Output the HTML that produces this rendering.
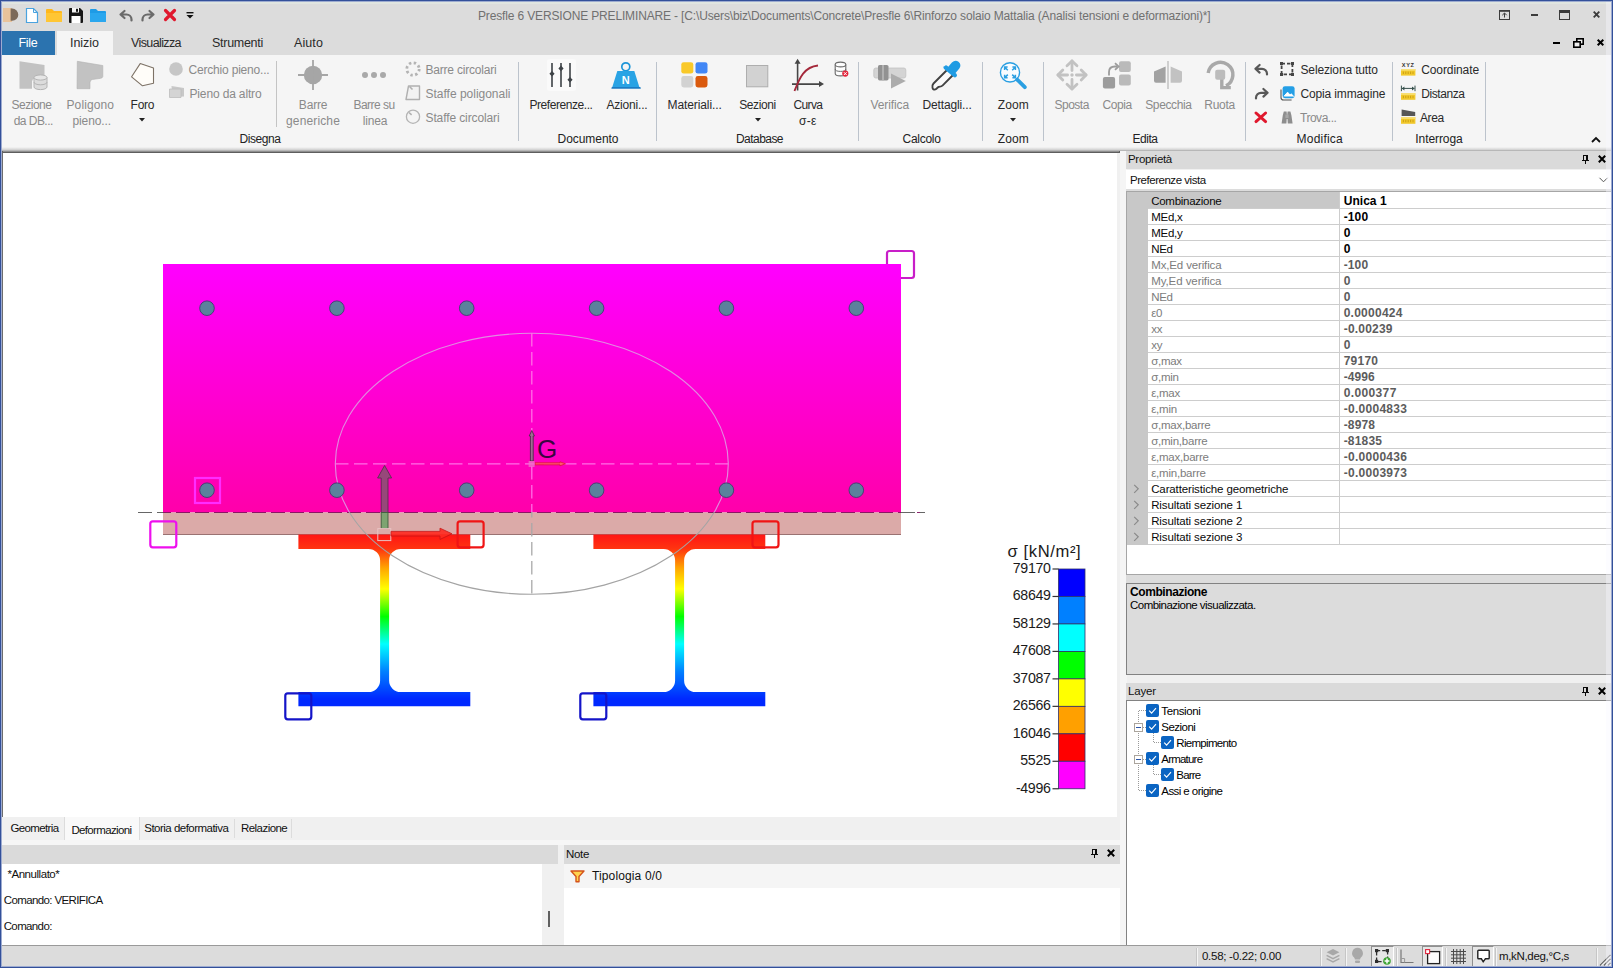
<!DOCTYPE html>
<html lang="it">
<head>
<meta charset="utf-8">
<title>Presfle 6</title>
<style>
*{box-sizing:border-box;margin:0;padding:0}
html,body{width:1613px;height:968px;overflow:hidden;background:#dcdcdc}
body{position:relative;font-family:"Liberation Sans",sans-serif;font-size:12px;color:#2a2a2a}
.a{position:absolute}
.t{position:absolute;white-space:nowrap;line-height:14px}
svg{position:absolute;overflow:visible}
/* frame */
#frame{left:0;top:0;width:1613px;height:968px;border:1px solid #33509a;pointer-events:none;z-index:50}
#titlebar{left:1px;top:1px;width:1611px;height:53px;background:#dcdcdc}
#ribbon{left:1px;top:55px;width:1611px;height:95px;background:#f5f5f5}
#ribshadow{left:1px;top:147px;width:1611px;height:4px;background:linear-gradient(#f5f5f5,#d8d8d8 60%,#a8a8a8)}
/* canvas */
#mid{left:1px;top:151px;width:1611px;height:794px;background:#f0f0f0}
#canvasbox{left:1px;top:151px;width:1119px;height:666px;background:#f0f0f0;border-left:2px solid #6d6d6d;border-top:2px solid #5e5e5e}
#canvas{left:3px;top:153px;width:1113.5px;height:664px;background:#fff}
#vtabs{left:1px;top:817px;width:1119px;height:23px;background:#f0f0f0}
/* layer tree */
.cb{position:absolute;width:13px;height:13px;background:#0a64c2;border-radius:2px}
</style>
</head>
<body>
<div class="a" id="titlebar"></div>

<div class="a" style="left:1px;top:1px;width:1611px;height:1px;background:#9dabd0"></div><div class="a" style="left:1px;top:2px;width:1611px;height:2px;background:#e0e5e0"></div>
<div class="a" id="ribbon"></div>
<div class="a" id="ribshadow"></div>
<svg style="left:3px;top:7px" width="16" height="16" viewBox="0 0 16 16"><rect x="0" y="1" width="9" height="14" fill="#e9c39b"/><path d="M7.6 1.6h1.6a6.1 6.1 0 0 1 0 12.2h-1.6z" fill="#7c6a5a"/></svg>
<svg style="left:25px;top:7px" width="14" height="17" viewBox="0 0 14 17"><path d="M1.5 1.5h7l4 4v10h-11z" fill="#fff" stroke="#4aa3df" stroke-width="1.2"/><path d="M8.5 1.5v4h4" fill="none" stroke="#4aa3df" stroke-width="1"/></svg>
<svg style="left:46px;top:8px" width="16" height="14" viewBox="0 0 16 14"><path d="M0 2a1 1 0 0 1 1-1h5l2 2h7a1 1 0 0 1 1 1v9a1 1 0 0 1-1 1h-14a1 1 0 0 1-1-1z" fill="#ffb81c"/><path d="M0 5h16v8a1 1 0 0 1-1 1h-14a1 1 0 0 1-1-1z" fill="#ffc634"/></svg>
<svg style="left:69px;top:8px" width="14" height="15" viewBox="0 0 14 15"><path d="M0 1a1 1 0 0 1 1-1h10l3 3v11a1 1 0 0 1-1 1h-12a1 1 0 0 1-1-1z" fill="#161616"/><rect x="3" y="0" width="7" height="4.5" fill="#f5f5f5"/><rect x="7" y="0.8" width="2" height="3" fill="#161616"/><rect x="2.5" y="8" width="9" height="7" fill="#fff"/></svg>
<svg style="left:90px;top:8px" width="16" height="14" viewBox="0 0 16 14"><path d="M0 2a1 1 0 0 1 1-1h5l2 2h7a1 1 0 0 1 1 1v9a1 1 0 0 1-1 1h-14a1 1 0 0 1-1-1z" fill="#1e9be6"/><path d="M0 5h16v8a1 1 0 0 1-1 1h-14a1 1 0 0 1-1-1z" fill="#2aa7ee"/></svg>
<svg style="left:119px;top:10px" width="14" height="11" viewBox="0 0 14 11"><path d="M5.5 1L1.5 4.5l4 3.5M1.5 4.5h6a5 5 0 0 1 5 5v1" fill="none" stroke="#6a6a6a" stroke-width="2.2" stroke-linecap="round" stroke-linejoin="round"/></svg>
<svg style="left:141px;top:10px" width="14" height="11" viewBox="0 0 14 11"><path d="M8.5 1l4 3.5l-4 3.5M12.5 4.5h-6a5 5 0 0 0 -5 5v1" fill="none" stroke="#6a6a6a" stroke-width="2.2" stroke-linecap="round" stroke-linejoin="round"/></svg>
<svg style="left:164px;top:9px" width="12" height="12" viewBox="0 0 12 12"><path d="M1.5 1.5l9 9M10.5 1.5l-9 9" stroke="#e0182d" stroke-width="3.2" stroke-linecap="round"/></svg>
<svg style="left:186px;top:12px" width="8" height="7" viewBox="0 0 8 7"><rect x="0.5" y="0" width="7" height="1.4" fill="#111"/><path d="M0.5 3h7l-3.5 3.6z" fill="#111"/></svg>
<div class="t" style="left:478.0px;top:9px;letter-spacing:-0.15px;color:#707070;">Presfle 6 VERSIONE PRELIMINARE - [C:\Users\biz\Documents\Concrete\Presfle 6\Rinforzo solaio Mattalia (Analisi tensioni e deformazioni)*]</div>
<svg style="left:1499px;top:10px" width="11" height="10" viewBox="0 0 11 10"><rect x="0.5" y="1" width="10" height="8.5" fill="none" stroke="#3c3c3c" stroke-width="1"/><rect x="0" y="0" width="11" height="1.6" fill="#3c3c3c"/><path d="M5.5 7.5v-4.3M3.3 5.2l2.2-2.2l2.2 2.2" fill="none" stroke="#3c3c3c" stroke-width="1"/></svg>
<div class="a" style="left:1531px;top:14px;width:7px;height:2px;background:#3c3c3c;"></div>
<svg style="left:1559px;top:10px" width="11" height="10" viewBox="0 0 11 10"><rect x="0.5" y="1" width="10" height="8.5" fill="none" stroke="#3c3c3c" stroke-width="1"/><rect x="0" y="0" width="11" height="3" fill="#3c3c3c"/></svg>
<svg style="left:1593px;top:11px" width="7" height="7" viewBox="0 0 7 7"><path d="M0.7 0.7l5.6 5.6M6.3 0.7l-5.6 5.6" stroke="#3c3c3c" stroke-width="1.9"/></svg>
<div class="a" style="left:1553px;top:42px;width:7px;height:2px;background:#000;"></div>
<svg style="left:1573px;top:38px" width="11" height="10" viewBox="0 0 11 10"><rect x="3.8" y="0.8" width="6.4" height="5.4" fill="#f0f0f0" stroke="#000" stroke-width="1.6"/><rect x="0.8" y="3.8" width="6.4" height="5.4" fill="#f0f0f0" stroke="#000" stroke-width="1.6"/></svg>
<svg style="left:1597px;top:39px" width="7" height="7" viewBox="0 0 7 7"><path d="M0.7 0.7l5.6 5.6M6.3 0.7l-5.6 5.6" stroke="#000" stroke-width="2"/></svg>

<div class="a" style="left:1px;top:31px;width:54px;height:24px;background:#2b73af;"></div>
<div class="a" style="left:57px;top:31px;width:56px;height:24px;background:#f5f5f5;"></div>
<div class="t" style="left:18.5px;top:36px;letter-spacing:-0.29px;font-size:12.5px;color:#fff;">File</div>
<div class="t" style="left:70.0px;top:36px;letter-spacing:-0.03px;font-size:12.5px;">Inizio</div>
<div class="t" style="left:131.0px;top:36px;letter-spacing:-0.61px;font-size:12.5px;">Visualizza</div>
<div class="t" style="left:212.0px;top:36px;letter-spacing:-0.28px;font-size:12.5px;">Strumenti</div>
<div class="t" style="left:294.0px;top:36px;letter-spacing:0.10px;font-size:12.5px;">Aiuto</div>

<svg style="left:19px;top:61px" width="29" height="30" viewBox="0 0 29 30"><path d="M0.5 0.3L25.5 4v11.5q-12.5 0.5-12.5 5v7.2h-12.5z" fill="#c2c2c2"/><path d="M15 16.5v9.5a6.5 2.6 0 0 0 13 0v-9.5z" fill="#dcdcdc" stroke="#b4b4b4" stroke-width="1"/><ellipse cx="21.5" cy="16.5" rx="6.5" ry="2.6" fill="#e6e6e6" stroke="#b4b4b4" stroke-width="1"/><path d="M15 21.2a6.5 2.6 0 0 0 13 0" fill="none" stroke="#b4b4b4" stroke-width="1"/></svg>
<div class="t" style="left:11.5px;top:98px;letter-spacing:-0.48px;color:#8a8a8a;">Sezione</div>
<div class="t" style="left:13.7px;top:114px;letter-spacing:-0.54px;color:#8a8a8a;">da DB...</div>
<svg style="left:77px;top:61px" width="26" height="28" viewBox="0 0 26 28"><path d="M0.3 0.3L25.8 4.5v11q-0.3 1.5-2 1.8l-8.5 1.2q-2.3 0.4-2.3 3v6.2h-13z" fill="#c2c2c2" stroke="#b2b2b2" stroke-width="0.6"/></svg>
<div class="t" style="left:66.5px;top:98px;letter-spacing:0.10px;color:#8a8a8a;">Poligono</div>
<div class="t" style="left:72.5px;top:114px;letter-spacing:-0.11px;color:#8a8a8a;">pieno...</div>
<svg style="left:131px;top:63px" width="24" height="24" viewBox="0 0 24 24"><path d="M9.2 0.6L22.5 5v15.2L11.5 22.8L0.6 13.8z" fill="#fffdf9" stroke="#7d7266" stroke-width="1.1" stroke-linejoin="round"/></svg>
<div class="t" style="left:130.6px;top:98px;letter-spacing:-0.29px;">Foro</div>
<svg style="left:139.3px;top:118px" width="6" height="4" viewBox="0 0 6 4"><path d="M0 0h6l-3 3.5z" fill="#222"/></svg>
<svg style="left:169px;top:62px" width="14" height="14" viewBox="0 0 14 14"><circle cx="7" cy="7" r="6.8" fill="#c6c6c6"/></svg>
<div class="t" style="left:188.5px;top:63px;letter-spacing:-0.19px;color:#8a8a8a;">Cerchio pieno...</div>
<svg style="left:169px;top:85px" width="16" height="14" viewBox="0 0 16 14"><path d="M2.5 1l12.5 2v8.5l-11.5 0.5z" fill="#c8c8c8"/><path d="M0.5 4h11.5v8.5h-11.5z" fill="#d4d4d4" stroke="#bdbdbd" stroke-width="0.8"/></svg>
<div class="t" style="left:189.5px;top:87px;letter-spacing:-0.15px;color:#8a8a8a;">Pieno da altro</div>
<div class="a" style="left:276px;top:61px;width:1px;height:66px;background:#c4c4c4;"></div>
<div class="t" style="left:239.5px;top:132px;letter-spacing:-0.43px;color:#222;">Disegna</div>
<svg style="left:298px;top:60px" width="30" height="30" viewBox="0 0 30 30"><circle cx="15" cy="15" r="9.2" fill="#a6a6a6"/><path d="M15 0v30M0 15h30" stroke="#a6a6a6" stroke-width="1.8"/></svg>
<div class="t" style="left:298.8px;top:98px;letter-spacing:-0.17px;color:#8a8a8a;">Barre</div>
<div class="t" style="left:286.0px;top:114px;letter-spacing:0.14px;color:#8a8a8a;">generiche</div>
<svg style="left:361px;top:71px" width="26" height="8" viewBox="0 0 26 8"><circle cx="4" cy="4" r="3" fill="#a9a9a9"/><circle cx="13" cy="4" r="3" fill="#a9a9a9"/><circle cx="22" cy="4" r="3" fill="#a9a9a9"/></svg>
<div class="t" style="left:353.5px;top:98px;letter-spacing:-0.54px;color:#8a8a8a;">Barre su</div>
<div class="t" style="left:362.7px;top:114px;letter-spacing:-0.15px;color:#8a8a8a;">linea</div>
<svg style="left:405px;top:61px" width="16" height="16" viewBox="0 0 16 16"><circle cx="8" cy="8" r="6.2" fill="none" stroke="#b4b4b4" stroke-width="2.8" stroke-dasharray="2.4 2.47"/></svg>
<div class="t" style="left:425.5px;top:63px;letter-spacing:-0.20px;color:#8a8a8a;">Barre circolari</div>
<svg style="left:405px;top:85px" width="16" height="16" viewBox="0 0 16 16"><path d="M3.5 1h11v13.5h-13.5z" fill="#f2f2f2" stroke="#b0b0b0" stroke-width="1.4" stroke-linejoin="round"/><path d="M4.5 1.5l3 3" stroke="#b0b0b0" stroke-width="1.6"/></svg>
<div class="t" style="left:425.5px;top:87px;letter-spacing:-0.01px;color:#8a8a8a;">Staffe poligonali</div>
<svg style="left:405px;top:109px" width="16" height="16" viewBox="0 0 16 16"><circle cx="8" cy="7.7" r="6.6" fill="#f4f4f4" stroke="#b4b4b4" stroke-width="1.3"/><path d="M4 3.5l2.6 2.4" stroke="#b0b0b0" stroke-width="1.6"/></svg>
<div class="t" style="left:425.5px;top:111px;letter-spacing:-0.11px;color:#8a8a8a;">Staffe circolari</div>
<div class="a" style="left:518px;top:62px;width:1px;height:79px;background:#bcc3cc;"></div>
<div class="a" style="left:547px;top:59px;width:29px;height:32px;background:#fafafa;border-radius:3px;"></div>
<svg style="left:547px;top:62px" width="28" height="26" viewBox="0 0 28 26"><path d="M5 1v24M14 1v24M23 1v24" stroke="#3e4347" stroke-width="1.6"/><path d="M5 9l2.6 2.8L5 14.6L2.4 11.8z M14 3.6l2.6 2.8L14 9.2L11.4 6.4z M23 15l2.6 2.8L23 20.6L20.4 17.8z" fill="#3e4347"/></svg>
<div class="t" style="left:529.5px;top:98px;letter-spacing:-0.44px;">Preferenze...</div>
<svg style="left:611px;top:61px" width="30" height="29" viewBox="0 0 30 29"><circle cx="14.8" cy="5.8" r="4" fill="#f5f5f5" stroke="#1e96d8" stroke-width="1.7"/><path d="M6.3 10h17l5 16h-27z" fill="#29a3e4"/><path d="M0.8 26h28.6l0.4 1.8h-29.4z" fill="#1b7cc4"/></svg>
<div class="t" style="left:621.8px;top:73px;font-size:11px;color:#fff;font-weight:bold;">N</div>
<div class="t" style="left:606.5px;top:98px;letter-spacing:-0.19px;">Azioni...</div>
<div class="t" style="left:557.5px;top:132px;letter-spacing:-0.04px;color:#222;">Documento</div>
<div class="a" style="left:656px;top:62px;width:1px;height:79px;background:#bcc3cc;"></div>
<svg style="left:680.5px;top:62px" width="27" height="26" viewBox="0 0 27 26"><rect x="0.3" y="0.2" width="12" height="11.4" rx="2.4" fill="#f9c929"/><rect x="14.5" y="0.2" width="12" height="11.4" rx="2.4" fill="#4287f5"/><rect x="0.3" y="14" width="12" height="11.4" rx="2.4" fill="#d2d2d2"/><rect x="14.5" y="14" width="12" height="11.4" rx="2.4" fill="#da5a0e"/></svg>
<div class="t" style="left:667.6px;top:98px;letter-spacing:-0.11px;">Materiali...</div>
<svg style="left:746px;top:65px" width="22" height="22" viewBox="0 0 22 22"><rect x="0.5" y="0.5" width="21.3" height="21.3" fill="#d2d2d2" stroke="#aeaeae" stroke-width="1"/></svg>
<div class="t" style="left:739.2px;top:98px;letter-spacing:-0.41px;">Sezioni</div>
<svg style="left:754.5px;top:118px" width="6" height="4" viewBox="0 0 6 4"><path d="M0 0h6l-3 3.5z" fill="#222"/></svg>
<svg style="left:791px;top:58px" width="34" height="34" viewBox="0 0 34 34"><path d="M6.6 32.5V4M1 26.1h28" stroke="#464646" stroke-width="1.6" fill="none"/><path d="M6.6 0.8l3 5h-6zM33 26.1l-5 3v-6z" fill="#464646"/><path d="M3.5 33C8 22 12 9 27 7.5" stroke="#a4283a" stroke-width="1.8" fill="none"/></svg>
<div class="t" style="left:793.4px;top:98px;letter-spacing:-0.60px;">Curva</div>
<div class="t" style="left:799.1px;top:114px;letter-spacing:0.25px;">σ-ε</div>
<svg style="left:834px;top:61px" width="15" height="17" viewBox="0 0 15 17"><path d="M1.2 3.5v9a5.3 2.4 0 0 0 10.6 0v-9" fill="#fdfdfd" stroke="#6a6a6a" stroke-width="1.1"/><ellipse cx="6.5" cy="3.5" rx="5.3" ry="2.4" fill="#fdfdfd" stroke="#6a6a6a" stroke-width="1.1"/><path d="M1.2 8a5.3 2.4 0 0 0 10.6 0" fill="none" stroke="#6a6a6a" stroke-width="1"/><circle cx="11.3" cy="12.6" r="3.1" fill="#e3243b"/><path d="M9.9 11.2l2.8 2.8M12.7 11.2l-2.8 2.8" stroke="#fff" stroke-width="1"/></svg>
<div class="t" style="left:736.0px;top:132px;letter-spacing:-0.55px;color:#222;">Database</div>
<div class="a" style="left:858px;top:62px;width:1px;height:79px;background:#bcc3cc;"></div>
<svg style="left:873px;top:64px" width="34" height="26" viewBox="0 0 34 26"><rect x="0.8" y="4" width="32" height="10" rx="2" fill="#d4d4d4" stroke="#c2c2c2" stroke-width="0.8"/><rect x="5" y="1" width="10.5" height="15.4" rx="1.6" fill="#929292"/><rect x="9.2" y="1" width="1.6" height="15.4" fill="#b8b8b8"/><path d="M18 9.6l14.8 7.5l-14.8 7.5z" fill="#acacac"/></svg>
<div class="t" style="left:870.5px;top:98px;letter-spacing:-0.11px;color:#8a8a8a;">Verifica</div>
<svg style="left:930px;top:58px" width="36" height="34" viewBox="0 0 36 34"><path d="M17.5 11.5L3.5 25.5q-1.6 1.8-1 4.4l0.6 1.2q1.6 1 3 0l1.6-1.6q0.8-0.9 2.4-0.9q1.4 0 2.6-1.2L24.5 15.5" fill="#fafafa" stroke="#424242" stroke-width="1.9" stroke-linejoin="round"/><path d="M14.5 8.2q1.4-1.6 3-0.2l0.8 0.7l3.6-4.2q3.2-3 6.6-0.8q3.4 3 0.8 6.8l-3.8 4.4l0.9 0.8q1.4 1.4 0 3q-1.4 1.4-3 0.1l-9.3-7.8q-1.2-1.4-0.4-2.8z" fill="#1f9be3"/></svg>
<div class="t" style="left:922.4px;top:98px;letter-spacing:-0.13px;">Dettagli...</div>
<div class="t" style="left:902.6px;top:132px;letter-spacing:-0.29px;color:#222;">Calcolo</div>
<div class="a" style="left:982px;top:62px;width:1px;height:79px;background:#bcc3cc;"></div>
<svg style="left:998px;top:60px" width="30" height="30" viewBox="0 0 30 30"><circle cx="12" cy="12.4" r="9.6" fill="#f8fcff" stroke="#2a9fe2" stroke-width="1.4"/><path d="M19.2 19.6l7.6 7.6" stroke="#2a9fe2" stroke-width="3.8" stroke-linecap="round"/><path d="M6.6 10V7h3M6.8 7.2l3 3M17.4 10V7h-3M17.2 7.2l-3 3M6.6 14.8v3h3M6.8 17.6l3-3M17.4 14.8v3h-3M17.2 17.6l-3-3" fill="none" stroke="#2a9fe2" stroke-width="1.5"/></svg>
<div class="t" style="left:997.8px;top:98px;letter-spacing:0.13px;">Zoom</div>
<svg style="left:1010.4px;top:118px" width="6" height="4" viewBox="0 0 6 4"><path d="M0 0h6l-3 3.5z" fill="#222"/></svg>
<div class="t" style="left:997.8px;top:132px;letter-spacing:0.13px;color:#222;">Zoom</div>
<div class="a" style="left:1043px;top:62px;width:1px;height:79px;background:#bcc3cc;"></div>
<svg style="left:1057px;top:60px" width="30" height="30" viewBox="0 0 30 30"><path d="M15 1v9.6M15 29v-9.6M1 15h9.6M29 15h-9.6" stroke="#c2c2c2" stroke-width="2.8" stroke-linecap="round"/><path d="M10 5.8L15 0.9l5 4.9M10 24.2l5 4.9l5-4.9M5.8 10L0.9 15l4.9 5M24.2 10l4.9 5l-4.9 5" fill="none" stroke="#c2c2c2" stroke-width="2.8" stroke-linecap="round" stroke-linejoin="round"/><circle cx="15" cy="15" r="1.7" fill="#c2c2c2"/></svg>
<div class="t" style="left:1054.6px;top:98px;letter-spacing:-0.53px;color:#8a8a8a;">Sposta</div>
<svg style="left:1102px;top:60px" width="30" height="30" viewBox="0 0 30 30"><rect x="0.9" y="17" width="12.2" height="11.6" rx="2" fill="#9c9c9c"/><rect x="17" y="1.2" width="11.8" height="10.8" rx="2" fill="#bababa"/><rect x="17" y="14.4" width="11.8" height="11.2" rx="2" fill="#bababa"/><path d="M7 15.5v-3.5q0-5.5 6-5.5h2" fill="none" stroke="#9c9c9c" stroke-width="1.8"/><path d="M13 3.2l3.6 3.3l-3.6 3.3" fill="none" stroke="#9c9c9c" stroke-width="1.8"/></svg>
<div class="t" style="left:1102.4px;top:98px;letter-spacing:-0.41px;color:#8a8a8a;">Copia</div>
<svg style="left:1153px;top:60px" width="30" height="30" viewBox="0 0 30 30"><path d="M1 11.5L12.6 6.4v16.4h-9.6q-2 0-2-2z" fill="#a2a2a2"/><path d="M29 11.5L17.6 6.4v16.4h9.4q2 0 2-2z" fill="#c2c2c2"/><path d="M15 1v28" stroke="#c6c6c6" stroke-width="1.6"/></svg>
<div class="t" style="left:1145.2px;top:98px;letter-spacing:-0.36px;color:#8a8a8a;">Specchia</div>
<svg style="left:1204px;top:58px" width="34" height="34" viewBox="0 0 34 34"><path d="M4.2 15A12.4 12.4 0 1 1 22 27.8" fill="none" stroke="#a9a9a9" stroke-width="3.5"/><path d="M17.8 20.4v9.2h9" fill="none" stroke="#a9a9a9" stroke-width="3.4"/><rect x="11.2" y="11.8" width="10" height="10" rx="2" fill="#bcbcbc"/></svg>
<div class="t" style="left:1204.3px;top:98px;letter-spacing:-0.28px;color:#8a8a8a;">Ruota</div>
<div class="t" style="left:1132.5px;top:132px;letter-spacing:-0.47px;color:#222;">Edita</div>
<div class="a" style="left:1245px;top:62px;width:1px;height:79px;background:#bcc3cc;"></div>
<svg style="left:1254px;top:64px" width="15" height="11" viewBox="0 0 15 11"><path d="M5.6 1L1.4 4.8l4.2 3.8M1.6 4.8h6.4a5 5 0 0 1 5 5v0.6" fill="none" stroke="#585858" stroke-width="2.2" stroke-linecap="round" stroke-linejoin="round"/></svg>
<svg style="left:1254px;top:88px" width="15" height="11" viewBox="0 0 15 11"><path d="M9.4 1l4.2 3.8l-4.2 3.8M13.4 4.8h-6.4a5 5 0 0 0 -5 5v0.6" fill="none" stroke="#585858" stroke-width="2.2" stroke-linecap="round" stroke-linejoin="round"/></svg>
<svg style="left:1254px;top:111px" width="14" height="13" viewBox="0 0 14 13"><path d="M2 2l9.6 8.6M11.6 2l-9.6 8.6" stroke="#e0182d" stroke-width="3" stroke-linecap="round"/></svg>
<svg style="left:1280px;top:62px" width="14" height="14" viewBox="0 0 14 14"><rect x="1.6" y="1.6" width="10.8" height="10.8" fill="none" stroke="#454545" stroke-width="1.8" stroke-dasharray="3.4 2"/><rect x="0" y="0" width="3" height="3" fill="#454545"/><rect x="11" y="0" width="3" height="3" fill="#454545"/><rect x="0" y="11" width="3" height="3" fill="#454545"/><rect x="11" y="11" width="3" height="3" fill="#454545"/></svg>
<div class="t" style="left:1300.5px;top:63px;letter-spacing:-0.14px;">Seleziona tutto</div>
<svg style="left:1280px;top:86px" width="15" height="15" viewBox="0 0 15 15"><path d="M1 3.4v8q0 2.6 2.6 2.6h8" fill="none" stroke="#555" stroke-width="1.1"/><rect x="2.6" y="0.2" width="12" height="12" rx="2.4" fill="#249fe6"/><path d="M4 10.6l3.6-4.4l2.2 2.6l1.4-1.4l2.6 3.2z" fill="#fff"/><path d="M4 10.2l3.6-4l2.6 3l1.2-1.2l2.4 2.6" fill="none" stroke="#fff" stroke-width="1"/></svg>
<div class="t" style="left:1300.5px;top:87px;letter-spacing:-0.14px;">Copia immagine</div>
<svg style="left:1280px;top:110px" width="14" height="14" viewBox="0 0 14 14"><path d="M1.6 13.4l1.2-8.2l1-3.6h2.8l0.4 4h0.2l0.4-4h2.8l1 3.6l1.2 8.2h-4.8l-0.3-4.4h-0.8l-0.3 4.4z" fill="#8e8e8e"/><rect x="5.4" y="4.6" width="3.2" height="3.4" fill="#a8a8a8"/></svg>
<div class="t" style="left:1300.0px;top:111px;letter-spacing:-0.48px;color:#8a8a8a;">Trova...</div>
<div class="t" style="left:1296.6px;top:132px;letter-spacing:0.21px;color:#222;">Modifica</div>
<div class="a" style="left:1392px;top:62px;width:1px;height:79px;background:#bcc3cc;"></div>
<svg style="left:1400.8px;top:62px" width="15" height="14" viewBox="0 0 15 14"><text x="7.2" y="4.6" font-size="5.6" font-weight="bold" text-anchor="middle" fill="#333" font-family="Liberation Sans,sans-serif" letter-spacing="0.6">XYZ</text><rect x="0" y="7" width="14.4" height="6.6" fill="#f2c92c"/><rect x="0" y="7" width="14.4" height="1.6" fill="#f9e27a"/><path d="M2.4 9.6v2.4M4.8 9.6v2.4M7.2 9.6v2.4M9.6 9.6v2.4M12 9.6v2.4" stroke="#c79c12" stroke-width="0.9"/></svg>
<div class="t" style="left:1421.2px;top:63px;letter-spacing:-0.09px;">Coordinate</div>
<svg style="left:1400.8px;top:85px" width="15" height="16" viewBox="0 0 15 16"><path d="M0.4 0.6v5.6M14 0.6v5.6M1 3.4h12.4" stroke="#36504c" stroke-width="1" fill="none"/><path d="M0.8 3.4l2.6-2v4zM13.6 3.4l-2.6-2v4z" fill="#36504c"/><rect x="0" y="8.2" width="14.4" height="6.6" fill="#f2c92c"/><rect x="0" y="8.2" width="14.4" height="1.6" fill="#f9e27a"/><path d="M2.4 10.8v2.4M4.8 10.8v2.4M7.2 10.8v2.4M9.6 10.8v2.4M12 10.8v2.4" stroke="#c79c12" stroke-width="0.9"/></svg>
<div class="t" style="left:1421.2px;top:87px;letter-spacing:-0.41px;">Distanza</div>
<svg style="left:1400.8px;top:109px" width="15" height="16" viewBox="0 0 15 16"><path d="M0.6 0.6l13.6 2.4v4h-13.6z" fill="#575757"/><rect x="0" y="8.2" width="14.4" height="6.6" fill="#f2c92c"/><rect x="0" y="8.2" width="14.4" height="1.6" fill="#f9e27a"/><path d="M2.4 10.8v2.4M4.8 10.8v2.4M7.2 10.8v2.4M9.6 10.8v2.4M12 10.8v2.4" stroke="#c79c12" stroke-width="0.9"/></svg>
<div class="t" style="left:1420.0px;top:111px;letter-spacing:-0.41px;">Area</div>
<div class="t" style="left:1415.3px;top:132px;letter-spacing:-0.08px;color:#222;">Interroga</div>
<div class="a" style="left:1485px;top:62px;width:1px;height:79px;background:#bcc3cc;"></div>
<svg style="left:1591px;top:137px" width="10" height="6" viewBox="0 0 10 6"><path d="M1 5l4-4l4 4" fill="none" stroke="#111" stroke-width="1.8"/></svg>

<div class="a" id="mid"></div>
<div class="a" id="canvasbox"></div>
<div class="a" id="canvas"></div>
<div class="a" style="left:3px;top:151px;width:1116px;height:1px;background:#8e8e8e"></div>
<svg style="left:0;top:0" width="1613" height="968" viewBox="0 0 1613 968"><defs><linearGradient id="gc" x1="0" y1="264" x2="0" y2="512" gradientUnits="userSpaceOnUse"><stop offset="0" stop-color="#ff00ff"/><stop offset="1" stop-color="#ff00aa"/></linearGradient><linearGradient id="gs" x1="0" y1="534" x2="0" y2="699" gradientUnits="userSpaceOnUse"><stop offset="0" stop-color="#ff1414"/><stop offset="0.09" stop-color="#ff3410"/><stop offset="0.206" stop-color="#ffa500"/><stop offset="0.3333" stop-color="#ffff00"/><stop offset="0.5" stop-color="#00ff00"/><stop offset="0.6667" stop-color="#00ffff"/><stop offset="0.8333" stop-color="#0080ff"/><stop offset="1" stop-color="#0028ff"/></linearGradient><clipPath id="cin"><rect x="163" y="264" width="738" height="248"/></clipPath><clipPath id="cout"><path d="M0 0H1120V830H0Z M163 264V512H901V264Z" clip-rule="evenodd"/></clipPath></defs><rect x="887" y="251" width="27" height="27" rx="2.5" fill="none" stroke="#c81ec8" stroke-width="2.2"/><rect x="163" y="264" width="738" height="248.5" fill="url(#gc)"/><rect x="163" y="512.5" width="738" height="22" fill="#dbaaa8"/><path d="M163 534.5H901" stroke="#9a7272" stroke-width="1"/><path d="M298.4 534.5H470.3V549H400.6A11.5 11.5 0 0 0 389.1 560.5V680.5A11.5 11.5 0 0 0 400.6 692H470.3V706.3H298.4V692H368.6A11.5 11.5 0 0 0 380.1 680.5V560.5A11.5 11.5 0 0 0 368.6 549H298.4Z" fill="url(#gs)"/><path d="M593.4 534.5H765.3V549H695.6A11.5 11.5 0 0 0 684.1 560.5V680.5A11.5 11.5 0 0 0 695.6 692H765.3V706.3H593.4V692H663.6A11.5 11.5 0 0 0 675.1 680.5V560.5A11.5 11.5 0 0 0 663.6 549H593.4Z" fill="url(#gs)"/><path d="M138 512.5H925" stroke="#7a0055" stroke-width="1.1" stroke-dasharray="14 5" opacity="0.85"/><path d="M138 512.5H163M901 512.5H925" stroke="#666" stroke-width="1.1" stroke-dasharray="14 5"/><g clip-path="url(#cin)"><ellipse cx="531.8" cy="463.8" rx="196.5" ry="130.5" fill="none" stroke="#e08ce0" stroke-width="1.1"/></g><g clip-path="url(#cout)"><ellipse cx="531.8" cy="463.8" rx="196.5" ry="130.5" fill="none" stroke="#a4a4a4" stroke-width="1.1"/></g><g clip-path="url(#cin)"><path d="M531.8 333V594M335 463.8H728" stroke="#ff6ee6" stroke-width="1.3" stroke-dasharray="13.5 5.5" fill="none"/></g><g clip-path="url(#cout)"><path d="M531.8 333V594M335 463.8H728" stroke="#a8a8a8" stroke-width="1.3" stroke-dasharray="13.5 5.5" fill="none"/></g><circle cx="207.0" cy="308.2" r="7.3" fill="#5b819c" stroke="#3d3f6e" stroke-width="0.9"/><circle cx="336.9" cy="308.2" r="7.3" fill="#5b819c" stroke="#3d3f6e" stroke-width="0.9"/><circle cx="466.7" cy="308.2" r="7.3" fill="#5b819c" stroke="#3d3f6e" stroke-width="0.9"/><circle cx="596.6" cy="308.2" r="7.3" fill="#5b819c" stroke="#3d3f6e" stroke-width="0.9"/><circle cx="726.4" cy="308.2" r="7.3" fill="#5b819c" stroke="#3d3f6e" stroke-width="0.9"/><circle cx="856.3" cy="308.2" r="7.3" fill="#5b819c" stroke="#3d3f6e" stroke-width="0.9"/><circle cx="207.0" cy="490.2" r="7.3" fill="#5b819c" stroke="#3d3f6e" stroke-width="0.9"/><circle cx="336.9" cy="490.2" r="7.3" fill="#5b819c" stroke="#3d3f6e" stroke-width="0.9"/><circle cx="466.7" cy="490.2" r="7.3" fill="#5b819c" stroke="#3d3f6e" stroke-width="0.9"/><circle cx="596.6" cy="490.2" r="7.3" fill="#5b819c" stroke="#3d3f6e" stroke-width="0.9"/><circle cx="726.4" cy="490.2" r="7.3" fill="#5b819c" stroke="#3d3f6e" stroke-width="0.9"/><circle cx="856.3" cy="490.2" r="7.3" fill="#5b819c" stroke="#3d3f6e" stroke-width="0.9"/><rect x="195" y="478" width="25" height="25" fill="none" stroke="#ff2cff" stroke-width="2.2"/><path d="M530.4 461V436l-1.2 0l2.6-5.5l2.6 5.5h-1.2V461z" fill="#a06a92" stroke="#3c2a3c" stroke-width="0.8"/><path d="M535 462.8H560l0-1l5.5 2l-5.5 2v-1H535z" fill="#ff5a6e" stroke="#e0103a" stroke-width="0.8"/><rect x="528.6" y="461" width="6" height="6" fill="#ee70c8" opacity="0.8"/><text x="537" y="457.6" font-family="Liberation Sans,sans-serif" font-size="26" fill="#3a0640">G</text><path d="M381.2 512.5V478h-3.6l7-12.5l7 12.5h-3.6V512.5z" fill="#97487a" stroke="#5a3050" stroke-width="0.9"/><rect x="381.2" y="512.5" width="6.8" height="16" fill="#7da471" stroke="#3f5f3f" stroke-width="0.9"/><rect x="377.8" y="528.6" width="13" height="12" fill="none" stroke="#e8c4c4" stroke-width="1"/><path d="M391 531.4H440v-3.2l12 5.6l-12 5.6v-3.4H391z" fill="#ff2a20" stroke="#c81414" stroke-width="0.9" opacity="0.9"/><rect x="150.3" y="521.3" width="26" height="26" rx="2.5" fill="none" stroke="#ee10ee" stroke-width="2.2"/><rect x="457.6" y="521.3" width="26" height="26" rx="2.5" fill="none" stroke="#f01414" stroke-width="2.2"/><rect x="752.5" y="521.3" width="26" height="26" rx="2.5" fill="none" stroke="#f01414" stroke-width="2.2"/><rect x="285.3" y="693.3" width="26" height="26" rx="2.5" fill="none" stroke="#1414c8" stroke-width="2.2"/><rect x="580.3" y="693.3" width="26" height="26" rx="2.5" fill="none" stroke="#1414c8" stroke-width="2.2"/><rect x="1058.5" y="569.00" width="26.5" height="27.47" fill="#0000ff" stroke="#30306a" stroke-width="0.8"/><rect x="1058.5" y="596.47" width="26.5" height="27.47" fill="#0080ff" stroke="#30306a" stroke-width="0.8"/><rect x="1058.5" y="623.94" width="26.5" height="27.47" fill="#00ffff" stroke="#30306a" stroke-width="0.8"/><rect x="1058.5" y="651.41" width="26.5" height="27.47" fill="#00ff00" stroke="#30306a" stroke-width="0.8"/><rect x="1058.5" y="678.88" width="26.5" height="27.47" fill="#ffff00" stroke="#30306a" stroke-width="0.8"/><rect x="1058.5" y="706.35" width="26.5" height="27.47" fill="#ffa000" stroke="#30306a" stroke-width="0.8"/><rect x="1058.5" y="733.82" width="26.5" height="27.47" fill="#ff0000" stroke="#30306a" stroke-width="0.8"/><rect x="1058.5" y="761.29" width="26.5" height="27.47" fill="#ff00ff" stroke="#30306a" stroke-width="0.8"/><path d="M1052.5 569.00H1058.5" stroke="#333" stroke-width="1.2"/><text x="1050.5" y="572.8" text-anchor="end" font-family="Liberation Sans,sans-serif" font-size="14.2" letter-spacing="-0.35" fill="#1a1a1a">79170</text><path d="M1052.5 596.47H1058.5" stroke="#333" stroke-width="1.2"/><text x="1050.5" y="600.3" text-anchor="end" font-family="Liberation Sans,sans-serif" font-size="14.2" letter-spacing="-0.35" fill="#1a1a1a">68649</text><path d="M1052.5 623.94H1058.5" stroke="#333" stroke-width="1.2"/><text x="1050.5" y="627.7" text-anchor="end" font-family="Liberation Sans,sans-serif" font-size="14.2" letter-spacing="-0.35" fill="#1a1a1a">58129</text><path d="M1052.5 651.41H1058.5" stroke="#333" stroke-width="1.2"/><text x="1050.5" y="655.2" text-anchor="end" font-family="Liberation Sans,sans-serif" font-size="14.2" letter-spacing="-0.35" fill="#1a1a1a">47608</text><path d="M1052.5 678.88H1058.5" stroke="#333" stroke-width="1.2"/><text x="1050.5" y="682.7" text-anchor="end" font-family="Liberation Sans,sans-serif" font-size="14.2" letter-spacing="-0.35" fill="#1a1a1a">37087</text><path d="M1052.5 706.35H1058.5" stroke="#333" stroke-width="1.2"/><text x="1050.5" y="710.1" text-anchor="end" font-family="Liberation Sans,sans-serif" font-size="14.2" letter-spacing="-0.35" fill="#1a1a1a">26566</text><path d="M1052.5 733.82H1058.5" stroke="#333" stroke-width="1.2"/><text x="1050.5" y="737.6" text-anchor="end" font-family="Liberation Sans,sans-serif" font-size="14.2" letter-spacing="-0.35" fill="#1a1a1a">16046</text><path d="M1052.5 761.29H1058.5" stroke="#333" stroke-width="1.2"/><text x="1050.5" y="765.1" text-anchor="end" font-family="Liberation Sans,sans-serif" font-size="14.2" letter-spacing="-0.35" fill="#1a1a1a">5525</text><path d="M1052.5 788.76H1058.5" stroke="#333" stroke-width="1.2"/><text x="1050.5" y="792.6" text-anchor="end" font-family="Liberation Sans,sans-serif" font-size="14.2" letter-spacing="-0.35" fill="#1a1a1a">-4996</text><text x="1007.5" y="557" font-family="Liberation Sans,sans-serif" font-size="16.6" letter-spacing="0.6" fill="#1a1a1a">σ [kN/m²]</text></svg>

<div class="a" id="vtabs"></div>
<div class="a" style="left:64px;top:817px;width:76px;height:23px;background:#f9f9f9;border-right:1px solid #dcdcdc;border-left:1px solid #dcdcdc;"></div>
<div class="t" style="left:10.4px;top:820.5px;letter-spacing:-0.63px;font-size:11.5px;color:#111;">Geometria</div>
<div class="t" style="left:71.4px;top:822.5px;letter-spacing:-0.65px;font-size:11.5px;color:#111;">Deformazioni</div>
<div class="t" style="left:144.3px;top:820.5px;letter-spacing:-0.52px;font-size:11.5px;color:#111;">Storia deformativa</div>
<div class="t" style="left:241.0px;top:820.5px;letter-spacing:-0.55px;font-size:11.5px;color:#111;">Relazione</div>
<div class="a" style="left:234px;top:819px;width:1px;height:19px;background:#dcdcdc;"></div>
<div class="a" style="left:291px;top:819px;width:1px;height:19px;background:#dcdcdc;"></div>

<div class="a" style="left:1px;top:840px;width:1119px;height:5px;background:#f6f6f6;"></div>
<div class="a" style="left:2px;top:845px;width:556px;height:19px;background:#dadada;"></div>
<div class="a" style="left:2px;top:864px;width:540px;height:81px;background:#fff;"></div>
<div class="a" style="left:542px;top:864px;width:16px;height:81px;background:#f0f0f0;"></div>
<div class="a" style="left:548px;top:911px;width:2px;height:16px;background:#606060;"></div>
<div class="a" style="left:558px;top:845px;width:6px;height:100px;background:#f0f0f0;"></div>
<div class="t" style="left:7.4px;top:867px;letter-spacing:-0.45px;font-size:11.5px;color:#111;">*Annullato*</div>
<div class="t" style="left:3.7px;top:893px;letter-spacing:-0.61px;font-size:11.5px;color:#111;">Comando: VERIFICA</div>
<div class="t" style="left:3.7px;top:919px;letter-spacing:-0.63px;font-size:11.5px;color:#111;">Comando:</div>
<div class="a" style="left:564px;top:845px;width:557px;height:19px;background:#dadada;"></div>
<div class="t" style="left:566.0px;top:846.5px;letter-spacing:-0.32px;font-size:11.5px;color:#111;">Note</div>
<svg style="left:1091px;top:849px" width="7" height="9" viewBox="0 0 7 9"><path d="M1 0h5v1h-5zM1 0h1v5h-1zM4 0h2v5h-2zM0 5h7v1h-7zM3 6h1v3h-1z" fill="#0a0a0a"/></svg>
<svg style="left:1107px;top:849px" width="8" height="8" viewBox="0 0 8 8"><path d="M0.8 0.8l6.4 6.4M7.2 0.8l-6.4 6.4" stroke="#000" stroke-width="2"/></svg>
<div class="a" style="left:564px;top:864px;width:557px;height:24px;background:#f5f5f5;"></div>
<svg style="left:570px;top:870px" width="15" height="13" viewBox="0 0 15 13"><path d="M1 1h13l-5 5.4v5.4h-3v-5.4z" fill="#ffd34e" stroke="#d4531a" stroke-width="1.4" stroke-linejoin="round"/></svg>
<div class="t" style="left:592.0px;top:869px;letter-spacing:0.13px;color:#111;">Tipologia 0/0</div>
<div class="a" style="left:564px;top:888px;width:557px;height:57px;background:#fff;"></div>
<div class="a" style="left:1120px;top:151px;width:6.5px;height:794px;background:#f5f5f5;"></div>

<div class="a" style="left:1126px;top:151px;width:486px;height:18px;background:#dadada;"></div>
<div class="t" style="left:1128.0px;top:151.5px;letter-spacing:-0.30px;font-size:11.5px;color:#111;">Proprietà</div>
<svg style="left:1582px;top:155px" width="7" height="9" viewBox="0 0 7 9"><path d="M1 0h5v1h-5zM1 0h1v5h-1zM4 0h2v5h-2zM0 5h7v1h-7zM3 6h1v3h-1z" fill="#0a0a0a"/></svg>
<svg style="left:1598px;top:155px" width="8" height="8" viewBox="0 0 8 8"><path d="M0.8 0.8l6.4 6.4M7.2 0.8l-6.4 6.4" stroke="#000" stroke-width="2"/></svg>
<div class="a" style="left:1126px;top:170px;width:486px;height:19px;background:#fff;"></div>
<div class="t" style="left:1130.0px;top:172.5px;letter-spacing:-0.47px;font-size:11.5px;color:#111;">Preferenze vista</div>
<svg style="left:1599px;top:177px" width="9" height="6" viewBox="0 0 9 6"><path d="M0.5 0.8l4 4l4-4" fill="none" stroke="#555" stroke-width="1"/></svg>
<div class="a" style="left:1126px;top:189px;width:486px;height:394px;background:#dcdcdc;"></div>
<div class="a" style="left:1126px;top:191px;width:486px;height:384px;background:#fff;border:1px solid #a6a6a6;"></div>
<div class="a" style="left:1127px;top:192px;width:21px;height:353px;background:#c8c8c8;"></div>
<div class="a" style="left:1148px;top:192px;width:191px;height:16px;background:#c8c8c8;"></div>
<div class="a" style="left:1148px;top:208px;width:463px;height:1px;background:#cdcdcd;"></div>
<div class="t" style="left:1151.2px;top:193.5px;letter-spacing:-0.27px;font-size:11.5px;color:#0a0a0a;line-height:15px;">Combinazione</div>
<div class="t" style="left:1343.7px;top:194px;letter-spacing:0.04px;color:#000;font-weight:bold;line-height:15px;">Unica 1</div>
<div class="a" style="left:1148px;top:224px;width:463px;height:1px;background:#cdcdcd;"></div>
<div class="t" style="left:1151.2px;top:209.5px;letter-spacing:-0.28px;font-size:11.5px;color:#0a0a0a;line-height:15px;">MEd,x</div>
<div class="t" style="left:1343.7px;top:210px;letter-spacing:0.12px;color:#000;font-weight:bold;line-height:15px;">-100</div>
<div class="a" style="left:1148px;top:240px;width:463px;height:1px;background:#cdcdcd;"></div>
<div class="t" style="left:1151.2px;top:225.5px;letter-spacing:-0.28px;font-size:11.5px;color:#0a0a0a;line-height:15px;">MEd,y</div>
<div class="t" style="left:1343.7px;top:226px;color:#000;font-weight:bold;line-height:15px;">0</div>
<div class="a" style="left:1148px;top:256px;width:463px;height:1px;background:#cdcdcd;"></div>
<div class="t" style="left:1151.2px;top:241.5px;letter-spacing:-0.32px;font-size:11.5px;color:#0a0a0a;line-height:15px;">NEd</div>
<div class="t" style="left:1343.7px;top:242px;color:#000;font-weight:bold;line-height:15px;">0</div>
<div class="a" style="left:1148px;top:272px;width:463px;height:1px;background:#cdcdcd;"></div>
<div class="t" style="left:1151.2px;top:257.5px;letter-spacing:-0.14px;font-size:11.5px;color:#7c7c7c;line-height:15px;">Mx,Ed verifica</div>
<div class="t" style="left:1343.7px;top:258px;letter-spacing:0.12px;color:#5c5c5c;font-weight:bold;line-height:15px;">-100</div>
<div class="a" style="left:1148px;top:288px;width:463px;height:1px;background:#cdcdcd;"></div>
<div class="t" style="left:1151.2px;top:273.5px;letter-spacing:-0.08px;font-size:11.5px;color:#7c7c7c;line-height:15px;">My,Ed verifica</div>
<div class="t" style="left:1343.7px;top:274px;color:#5c5c5c;font-weight:bold;line-height:15px;">0</div>
<div class="a" style="left:1148px;top:304px;width:463px;height:1px;background:#cdcdcd;"></div>
<div class="t" style="left:1151.2px;top:289.5px;letter-spacing:-0.32px;font-size:11.5px;color:#7c7c7c;line-height:15px;">NEd</div>
<div class="t" style="left:1343.7px;top:290px;color:#5c5c5c;font-weight:bold;line-height:15px;">0</div>
<div class="a" style="left:1148px;top:320px;width:463px;height:1px;background:#cdcdcd;"></div>
<div class="t" style="left:1151.2px;top:305.5px;letter-spacing:-0.25px;font-size:11.5px;color:#7c7c7c;line-height:15px;">ε0</div>
<div class="t" style="left:1343.7px;top:306px;letter-spacing:0.25px;color:#5c5c5c;font-weight:bold;line-height:15px;">0.0000424</div>
<div class="a" style="left:1148px;top:336px;width:463px;height:1px;background:#cdcdcd;"></div>
<div class="t" style="left:1151.2px;top:321.5px;letter-spacing:-0.25px;font-size:11.5px;color:#7c7c7c;line-height:15px;">xx</div>
<div class="t" style="left:1343.7px;top:322px;letter-spacing:0.20px;color:#5c5c5c;font-weight:bold;line-height:15px;">-0.00239</div>
<div class="a" style="left:1148px;top:352px;width:463px;height:1px;background:#cdcdcd;"></div>
<div class="t" style="left:1151.2px;top:337.5px;letter-spacing:-0.25px;font-size:11.5px;color:#7c7c7c;line-height:15px;">xy</div>
<div class="t" style="left:1343.7px;top:338px;color:#5c5c5c;font-weight:bold;line-height:15px;">0</div>
<div class="a" style="left:1148px;top:368px;width:463px;height:1px;background:#cdcdcd;"></div>
<div class="t" style="left:1151.2px;top:353.5px;letter-spacing:-0.28px;font-size:11.5px;color:#7c7c7c;line-height:15px;">σ,max</div>
<div class="t" style="left:1343.7px;top:354px;letter-spacing:0.23px;color:#5c5c5c;font-weight:bold;line-height:15px;">79170</div>
<div class="a" style="left:1148px;top:384px;width:463px;height:1px;background:#cdcdcd;"></div>
<div class="t" style="left:1151.2px;top:369.5px;letter-spacing:-0.25px;font-size:11.5px;color:#7c7c7c;line-height:15px;">σ,min</div>
<div class="t" style="left:1343.7px;top:370px;letter-spacing:0.06px;color:#5c5c5c;font-weight:bold;line-height:15px;">-4996</div>
<div class="a" style="left:1148px;top:400px;width:463px;height:1px;background:#cdcdcd;"></div>
<div class="t" style="left:1151.2px;top:385.5px;letter-spacing:-0.26px;font-size:11.5px;color:#7c7c7c;line-height:15px;">ε,max</div>
<div class="t" style="left:1343.7px;top:386px;letter-spacing:0.37px;color:#5c5c5c;font-weight:bold;line-height:15px;">0.000377</div>
<div class="a" style="left:1148px;top:416px;width:463px;height:1px;background:#cdcdcd;"></div>
<div class="t" style="left:1151.2px;top:401.5px;letter-spacing:-0.23px;font-size:11.5px;color:#7c7c7c;line-height:15px;">ε,min</div>
<div class="t" style="left:1343.7px;top:402px;letter-spacing:0.28px;color:#5c5c5c;font-weight:bold;line-height:15px;">-0.0004833</div>
<div class="a" style="left:1148px;top:432px;width:463px;height:1px;background:#cdcdcd;"></div>
<div class="t" style="left:1151.2px;top:417.5px;letter-spacing:-0.25px;font-size:11.5px;color:#7c7c7c;line-height:15px;">σ,max,barre</div>
<div class="t" style="left:1343.7px;top:418px;letter-spacing:0.16px;color:#5c5c5c;font-weight:bold;line-height:15px;">-8978</div>
<div class="a" style="left:1148px;top:448px;width:463px;height:1px;background:#cdcdcd;"></div>
<div class="t" style="left:1151.2px;top:433.5px;letter-spacing:-0.23px;font-size:11.5px;color:#7c7c7c;line-height:15px;">σ,min,barre</div>
<div class="t" style="left:1343.7px;top:434px;letter-spacing:0.19px;color:#5c5c5c;font-weight:bold;line-height:15px;">-81835</div>
<div class="a" style="left:1148px;top:464px;width:463px;height:1px;background:#cdcdcd;"></div>
<div class="t" style="left:1151.2px;top:449.5px;letter-spacing:-0.24px;font-size:11.5px;color:#7c7c7c;line-height:15px;">ε,max,barre</div>
<div class="t" style="left:1343.7px;top:450px;letter-spacing:0.28px;color:#5c5c5c;font-weight:bold;line-height:15px;">-0.0000436</div>
<div class="a" style="left:1148px;top:480px;width:463px;height:1px;background:#cdcdcd;"></div>
<div class="t" style="left:1151.2px;top:465.5px;letter-spacing:-0.22px;font-size:11.5px;color:#7c7c7c;line-height:15px;">ε,min,barre</div>
<div class="t" style="left:1343.7px;top:466px;letter-spacing:0.28px;color:#5c5c5c;font-weight:bold;line-height:15px;">-0.0003973</div>
<div class="a" style="left:1148px;top:496px;width:463px;height:1px;background:#cdcdcd;"></div>
<div class="t" style="left:1151.2px;top:481.5px;letter-spacing:-0.13px;font-size:11.5px;color:#0a0a0a;line-height:15px;">Caratteristiche geometriche</div>
<svg style="left:1133px;top:484px" width="7" height="10" viewBox="0 0 7 10"><path d="M1.2 0.8l4 4l-4 4" fill="none" stroke="#8a8a8a" stroke-width="1.2"/></svg>
<div class="a" style="left:1148px;top:512px;width:463px;height:1px;background:#cdcdcd;"></div>
<div class="t" style="left:1151.2px;top:497.5px;letter-spacing:-0.12px;font-size:11.5px;color:#0a0a0a;line-height:15px;">Risultati sezione 1</div>
<svg style="left:1133px;top:500px" width="7" height="10" viewBox="0 0 7 10"><path d="M1.2 0.8l4 4l-4 4" fill="none" stroke="#8a8a8a" stroke-width="1.2"/></svg>
<div class="a" style="left:1148px;top:528px;width:463px;height:1px;background:#cdcdcd;"></div>
<div class="t" style="left:1151.2px;top:513.5px;letter-spacing:-0.12px;font-size:11.5px;color:#0a0a0a;line-height:15px;">Risultati sezione 2</div>
<svg style="left:1133px;top:516px" width="7" height="10" viewBox="0 0 7 10"><path d="M1.2 0.8l4 4l-4 4" fill="none" stroke="#8a8a8a" stroke-width="1.2"/></svg>
<div class="a" style="left:1148px;top:544px;width:463px;height:1px;background:#cdcdcd;"></div>
<div class="t" style="left:1151.2px;top:529.5px;letter-spacing:-0.12px;font-size:11.5px;color:#0a0a0a;line-height:15px;">Risultati sezione 3</div>
<svg style="left:1133px;top:532px" width="7" height="10" viewBox="0 0 7 10"><path d="M1.2 0.8l4 4l-4 4" fill="none" stroke="#8a8a8a" stroke-width="1.2"/></svg>
<div class="a" style="left:1339px;top:192px;width:1px;height:353px;background:#cdcdcd;"></div>
<div class="a" style="left:1126px;top:583px;width:486px;height:92px;background:#dcdcdc;border:1px solid #828282;"></div>
<div class="t" style="left:1130.0px;top:584.5px;letter-spacing:-0.42px;color:#000;font-weight:bold;">Combinazione</div>
<div class="t" style="left:1130.0px;top:597.5px;letter-spacing:-0.53px;font-size:11.5px;color:#000;">Combinazione visualizzata.</div>

<div class="a" style="left:1126px;top:683px;width:486px;height:17px;background:#dadada;"></div>
<div class="t" style="left:1128.0px;top:684px;letter-spacing:-0.15px;font-size:11.5px;color:#111;">Layer</div>
<svg style="left:1582px;top:687px" width="7" height="9" viewBox="0 0 7 9"><path d="M1 0h5v1h-5zM1 0h1v5h-1zM4 0h2v5h-2zM0 5h7v1h-7zM3 6h1v3h-1z" fill="#0a0a0a"/></svg>
<svg style="left:1598px;top:687px" width="8" height="8" viewBox="0 0 8 8"><path d="M0.8 0.8l6.4 6.4M7.2 0.8l-6.4 6.4" stroke="#000" stroke-width="2"/></svg>
<div class="a" style="left:1126px;top:700px;width:486px;height:246px;background:#fff;border:1px solid #828282;"></div>
<svg style="left:0px;top:0px" width="1613" height="968" viewBox="0 0 1613 968"><path d="M1138.5 711V791M1139 710.5H1146M1139 790.5H1146M1143 727.5H1146M1143 759.5H1146 M1153.5 733V743M1154 742.5H1161 M1153.5 765V775M1154 774.5H1161" stroke="#9a9a9a" stroke-width="1" stroke-dasharray="1 1" fill="none"/></svg>
<div class="cb" style="left:1146px;top:704px"></div><svg style="left:1146px;top:704px" width="13" height="13" viewBox="0 0 13 13"><path d="M3.2 6.6l2.4 2.6l4.4-5" fill="none" stroke="#fff" stroke-width="1.15"/></svg>
<div class="t" style="left:1161.3px;top:703.5px;letter-spacing:-0.40px;font-size:11.5px;color:#000;">Tensioni</div>
<div class="cb" style="left:1146px;top:720px"></div><svg style="left:1146px;top:720px" width="13" height="13" viewBox="0 0 13 13"><path d="M3.2 6.6l2.4 2.6l4.4-5" fill="none" stroke="#fff" stroke-width="1.15"/></svg>
<div class="t" style="left:1161.3px;top:719.5px;letter-spacing:-0.53px;font-size:11.5px;color:#000;">Sezioni</div>
<div class="cb" style="left:1161px;top:736px"></div><svg style="left:1161px;top:736px" width="13" height="13" viewBox="0 0 13 13"><path d="M3.2 6.6l2.4 2.6l4.4-5" fill="none" stroke="#fff" stroke-width="1.15"/></svg>
<div class="t" style="left:1176.3px;top:735.5px;letter-spacing:-0.70px;font-size:11.5px;color:#000;">Riempimento</div>
<div class="cb" style="left:1146px;top:752px"></div><svg style="left:1146px;top:752px" width="13" height="13" viewBox="0 0 13 13"><path d="M3.2 6.6l2.4 2.6l4.4-5" fill="none" stroke="#fff" stroke-width="1.15"/></svg>
<div class="t" style="left:1161.3px;top:751.5px;letter-spacing:-0.79px;font-size:11.5px;color:#000;">Armature</div>
<div class="cb" style="left:1161px;top:768px"></div><svg style="left:1161px;top:768px" width="13" height="13" viewBox="0 0 13 13"><path d="M3.2 6.6l2.4 2.6l4.4-5" fill="none" stroke="#fff" stroke-width="1.15"/></svg>
<div class="t" style="left:1176.3px;top:767.5px;letter-spacing:-0.82px;font-size:11.5px;color:#000;">Barre</div>
<div class="cb" style="left:1146px;top:784px"></div><svg style="left:1146px;top:784px" width="13" height="13" viewBox="0 0 13 13"><path d="M3.2 6.6l2.4 2.6l4.4-5" fill="none" stroke="#fff" stroke-width="1.15"/></svg>
<div class="t" style="left:1161.3px;top:783.5px;letter-spacing:-0.57px;font-size:11.5px;color:#000;">Assi e origine</div>
<svg style="left:1134px;top:723px" width="9" height="9" viewBox="0 0 9 9"><rect x="0.5" y="0.5" width="8" height="8" fill="#fff" stroke="#aaa49c" stroke-width="1"/><path d="M2 4.5h5" stroke="#2c55a8" stroke-width="1"/></svg>
<svg style="left:1134px;top:755px" width="9" height="9" viewBox="0 0 9 9"><rect x="0.5" y="0.5" width="8" height="8" fill="#fff" stroke="#aaa49c" stroke-width="1"/><path d="M2 4.5h5" stroke="#2c55a8" stroke-width="1"/></svg>

<div class="a" style="left:1px;top:945px;width:1611px;height:22px;background:#dcdcdc;border-top:1px solid #9a9a9a;"></div>
<div class="a" style="left:1196px;top:948px;width:1px;height:18px;background:#c6c6c6;"></div>
<div class="a" style="left:1197px;top:948px;width:1px;height:18px;background:#f4f4f4;"></div>
<div class="a" style="left:1320px;top:948px;width:1px;height:18px;background:#c6c6c6;"></div>
<div class="a" style="left:1321px;top:948px;width:1px;height:18px;background:#f4f4f4;"></div>
<div class="a" style="left:1345px;top:948px;width:1px;height:18px;background:#c6c6c6;"></div>
<div class="a" style="left:1346px;top:948px;width:1px;height:18px;background:#f4f4f4;"></div>
<div class="a" style="left:1396px;top:948px;width:1px;height:18px;background:#c6c6c6;"></div>
<div class="a" style="left:1397px;top:948px;width:1px;height:18px;background:#f4f4f4;"></div>
<div class="a" style="left:1445px;top:948px;width:1px;height:18px;background:#c6c6c6;"></div>
<div class="a" style="left:1446px;top:948px;width:1px;height:18px;background:#f4f4f4;"></div>
<div class="a" style="left:1495px;top:948px;width:1px;height:18px;background:#c6c6c6;"></div>
<div class="a" style="left:1496px;top:948px;width:1px;height:18px;background:#f4f4f4;"></div>
<div class="a" style="left:1596px;top:948px;width:1px;height:18px;background:#c6c6c6;"></div>
<div class="a" style="left:1597px;top:948px;width:1px;height:18px;background:#f4f4f4;"></div>
<div class="t" style="left:1202.0px;top:949px;letter-spacing:-0.28px;font-size:11.5px;color:#111;">0.58; -0.22; 0.00</div>
<svg style="left:1326px;top:948px" width="14" height="16" viewBox="0 0 14 16"><path d="M7 1l6.4 3.2L7 7.4L0.6 4.2z" fill="#a8a8a8"/><path d="M0.6 7.4L7 10.6l6.4-3.2M0.6 10.6L7 13.8l6.4-3.2" fill="none" stroke="#a8a8a8" stroke-width="1.5"/></svg>
<svg style="left:1351px;top:947px" width="13" height="17" viewBox="0 0 13 17"><path d="M6.5 0.8a5.4 5.4 0 0 1 3.4 9.6q-0.8 0.8-0.8 2.2h-5.2q0-1.4-0.8-2.2a5.4 5.4 0 0 1 3.4-9.6z" fill="#a8a8a8"/><rect x="4" y="13.4" width="5" height="2.6" rx="1" fill="#a8a8a8"/></svg>
<div class="a" style="left:1371px;top:946px;width:23px;height:21px;background:#e6e6e6;border:1px solid #8f8f8f;border-right-color:#fff;border-bottom-color:#fff;"></div>
<svg style="left:1375px;top:949px" width="16" height="16" viewBox="0 0 16 16"><rect x="1.6" y="1.6" width="11" height="11" fill="none" stroke="#2e2e2e" stroke-width="1.3" stroke-dasharray="3.6 2"/><rect x="0" y="0" width="3.2" height="3.2" fill="#2e2e2e"/><rect x="10.8" y="0" width="3.2" height="3.2" fill="#2e2e2e"/><rect x="0" y="10.8" width="3.2" height="3.2" fill="#2e2e2e"/><circle cx="12" cy="12" r="3.8" fill="#3fa535"/><path d="M9.6 12h4.8M12 9.6v4.8" stroke="#fff" stroke-width="1.5"/></svg>
<svg style="left:1400px;top:949px" width="14" height="15" viewBox="0 0 14 15"><path d="M1 0.5v13h12.5" fill="none" stroke="#777" stroke-width="1.2"/><path d="M1 9.5h3.6v4" fill="none" stroke="#999" stroke-width="1"/></svg>
<div class="a" style="left:1422px;top:946px;width:21px;height:21px;background:#e6e6e6;border:1px solid #8f8f8f;border-right-color:#fff;border-bottom-color:#fff;"></div>
<svg style="left:1425px;top:948px" width="16" height="17" viewBox="0 0 16 17"><rect x="2.6" y="3.6" width="12" height="12" fill="#fdfdfd" stroke="#222" stroke-width="1.3"/><rect x="0.6" y="1.6" width="4" height="4" fill="#fff" stroke="#e0243c" stroke-width="1.1"/></svg>
<svg style="left:1451px;top:949px" width="15" height="15" viewBox="0 0 15 15"><path d="M2.5 0v15M5.8 0v15M9.2 0v15M12.5 0v15M0 2.5h15M0 5.8h15M0 9.2h15M0 12.5h15" stroke="#4a4a4a" stroke-width="1"/></svg>
<div class="a" style="left:1472px;top:946px;width:22px;height:21px;background:#e6e6e6;border:1px solid #8f8f8f;border-right-color:#fff;border-bottom-color:#fff;"></div>
<svg style="left:1476px;top:949px" width="15" height="15" viewBox="0 0 15 15"><path d="M2.6 1.2h9.8q0.8 0 0.8 0.8v7q0 0.8-0.8 0.8h-3l-2.2 3l-1.8-3h-2.8q-0.8 0-0.8-0.8v-7q0-0.8 0.8-0.8z" fill="#fff" stroke="#222" stroke-width="1.4"/></svg>
<div class="t" style="left:1499.0px;top:949px;letter-spacing:-0.33px;font-size:11.5px;color:#111;">m,kN,deg,°C,s</div>
<svg style="left:1599px;top:954px" width="12" height="12" viewBox="0 0 12 12"><path d="M11.5 1L1 11.5M11.5 5L5 11.5M11.5 9L9 11.5" stroke="#5a5a5a" stroke-width="1.2"/><path d="M11.5 2.2L2.2 11.5M11.5 6.2L6.2 11.5M11.5 10.2L10.2 11.5" stroke="#fff" stroke-width="1"/></svg>

<div class="a" style="left:1px;top:1px;width:1611px;height:966px;border:1px solid #9dabd0;border-top:none;pointer-events:none;z-index:49"></div>
<div class="a" style="left:1606px;top:2px;width:5px;height:964px;background:rgba(248,248,255,0.4);z-index:48"></div>
<div class="a" id="frame"></div>
</body>
</html>
